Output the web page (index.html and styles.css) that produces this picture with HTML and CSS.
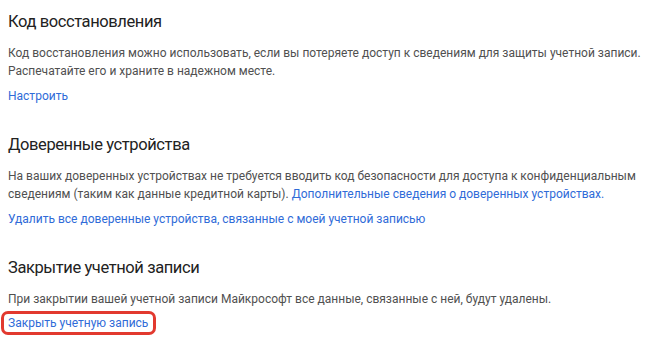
FILE: index.html
```html
<!DOCTYPE html>
<html lang="ru">
<head>
  <meta charset="UTF-8" />
  <meta name="viewport" content="width=device-width, initial-scale=1" />
  <title>Безопасность</title>
  <link rel="stylesheet" href="styles.css">
</head>
<body>
  <div class="page">
    <section class="section">
      <h2>Код восстановления</h2>
      <p>Код восстановления можно использовать, если вы потеряете доступ к сведениям для защиты учетной записи.<br>Распечатайте его и храните в надежном месте.</p>
      <a class="action" href="#">Настроить</a>
    </section>

    <section class="section">
      <h2>Доверенные устройства</h2>
      <p>На ваших доверенных устройствах не требуется вводить код безопасности для доступа к конфиденциальным<br>сведениям (таким как данные кредитной карты). <a href="#">Дополнительные сведения о доверенных устройствах.</a></p>
      <a class="action" href="#">Удалить все доверенные устройства, связанные с моей учетной записью</a>
    </section>

    <section class="section">
      <h2>Закрытие учетной записи</h2>
      <p>При закрытии вашей учетной записи Майкрософт все данные, связанные с ней, будут удалены.</p>
      <div class="action-row">
        <a class="action marked" href="#">Закрыть учетную запись</a>
      </div>
    </section>
  </div>
</body>
</html>
```

FILE: styles.css
```css
* {
  box-sizing: border-box;
  margin: 0;
  padding: 0;
}
body {
  font-family: Roboto, "Open Sans", sans-serif;
  background-color: #fff;
  color: #505050;
  padding: 8px 8px 0 8px;
}
.section {
  margin-bottom: 26px;
}
h2 {
  font-size: 16.5px;
  font-weight: 400;
  letter-spacing: -0.4px;
  line-height: 28px;
  color: #222;
}
p {
  font-size: 12px;
  line-height: 18px;
  margin-top: 8px;
  white-space: nowrap;
}
a {
  color: #2f6bd8;
  text-decoration: none;
}
.action {
  display: inline-block;
  font-size: 12px;
  line-height: 18px;
  margin-top: 7px;
}
.action-row {
  margin-top: 4px;
}
.action-row .action {
  margin-top: 0;
}
.marked {
  padding: 0 5px 0 4px;
  margin-left: -4px;
  outline: 3px solid #e2392f;
  border-radius: 4px;
}
```
